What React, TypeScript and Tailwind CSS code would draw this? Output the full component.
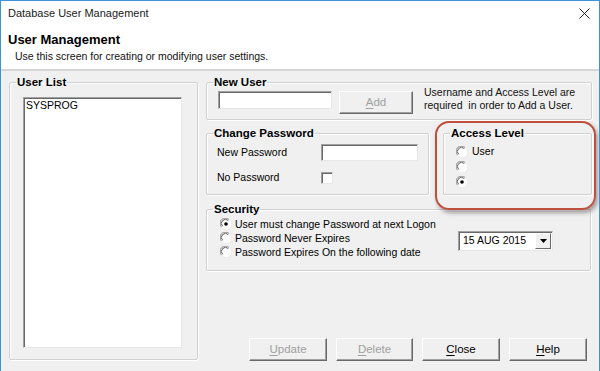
import React from 'react';

const font = "font-['Liberation_Sans',Arial,sans-serif]";

const GroupBox: React.FC<{ title: string; className?: string; children?: React.ReactNode }> = ({ title, className = '', children }) => (
  <fieldset className={`min-w-0 border border-[#d0d0d0] shadow-[1px_1px_0_#fff,inset_1px_1px_0_#fff] rounded-[2px] px-0 ${className}`}>
    <legend className="ml-[6px] px-[1px] text-[11.5px] leading-[13px] font-bold text-black">{title}</legend>
    {children}
  </fieldset>
);

const Sunken: React.FC<{ className?: string; children?: React.ReactNode }> = ({ className = '', children }) => (
  <div className={`bg-white border border-t-[#a0a0a0] border-l-[#a0a0a0] border-r-[#e6e6e6] border-b-[#e6e6e6] shadow-[inset_1px_1px_0_#696969] ${className}`}>
    {children}
  </div>
);

const Radio: React.FC<{ checked?: boolean }> = ({ checked }) => (
  <svg width="12" height="12" viewBox="0 0 12 12" className="shrink-0">
    <circle cx="6" cy="6" r="5.5" fill="#fff" />
    <path d="M1.6 9.2A5 5 0 0 1 9.2 1.6" stroke="#8a8a8a" strokeWidth="1" fill="none" />
    <path d="M2.6 8.3A3.7 3.7 0 0 1 8.3 2.6" stroke="#5a5a5a" strokeWidth="1" fill="none" />
    <path d="M10.4 2.8A5 5 0 0 1 2.8 10.4" stroke="#e8e8e8" strokeWidth="1" fill="none" />
    {checked && <circle cx="6" cy="6" r="1.8" fill="#000" />}
  </svg>
);

const Btn: React.FC<{ label: string; u: string; rest: string; disabled?: boolean; className?: string }> = ({ label, u, rest, disabled, className = '' }) => (
  <div
    className={`h-[23px] flex items-center justify-center bg-[#f0f0f0] border border-t-white border-l-white border-r-[#696969] border-b-[#696969] shadow-[inset_-1px_-1px_0_#a0a0a0] text-[11.5px] ${disabled ? 'text-[#a0a0a0]' : 'text-black'} ${className}`}
    aria-label={label}
  >
    <span className="underline underline-offset-[2px]">{u}</span>
    {rest}
  </div>
);

export default function App() {
  return (
    <div className={`${font} relative w-[600px] h-[371px] overflow-hidden bg-[#f0f0f0] border-t border-l border-r border-[#3d94dc] text-black`}>
      {/* title bar */}
      <div className="h-[25px] bg-white flex items-center justify-between pl-[7px] pr-[9px]">
        <span className="text-[11px] text-[#1a1a1a]">Database User Management</span>
        <svg width="11" height="11" viewBox="0 0 11 11">
          <path d="M0.5 0.5L10.5 10.5M10.5 0.5L0.5 10.5" stroke="#222" strokeWidth="1" />
        </svg>
      </div>

      {/* header */}
      <div className="h-[45px] bg-white border-b-2 border-[#d6d6d6] pl-[7px] pt-[6px]">
        <div className="text-[13px] leading-[15px] font-bold">User Management</div>
        <div className="text-[10.5px] leading-[13px] mt-[3px] ml-[7px] text-[#111]">Use this screen for creating or modifying user settings.</div>
      </div>

      {/* body */}
      <div className="flex pl-[8px] pt-[5px]">
        <GroupBox title="User List" className="w-[189px] h-[284px] shrink-0">
          <Sunken className="ml-[13px] mt-[8px] w-[159px] h-[251px] px-[2px] pt-[1px]">
            <div className="text-[10.5px] leading-[13px]">SYSPROG</div>
          </Sunken>
        </GroupBox>

        <div className="ml-[8px] w-[386px] flex flex-col">
          <GroupBox title="New User" className="h-[44px]">
            <div className="flex items-start mt-[2px]">
              <Sunken className="ml-[11px] w-[114px] h-[18px]" />
              <Btn label="Add" u="A" rest="dd" disabled className="ml-[7px] w-[74px] h-[19px]" />
              <div className="ml-[11px] text-[10.5px] leading-[13px] -mt-[5px] text-[#111]">
                Username and Access Level are
                <br />
                required&nbsp; in order to Add a User.
              </div>
            </div>
          </GroupBox>

          <div className="flex mt-[7px]">
            <GroupBox title="Change Password" className="w-[223px] h-[68px] shrink-0">
              <div className="flex items-center mt-[4px] text-[10.5px]">
                <span className="ml-[10px] w-[104px]">New Password</span>
                <Sunken className="w-[97px] h-[17px]" />
              </div>
              <div className="flex items-center mt-[9px] text-[10.5px]">
                <span className="ml-[10px] w-[104px]">No Password</span>
                <Sunken className="w-[12px] h-[12px]" />
              </div>
            </GroupBox>

            <GroupBox title="Access Level" className="ml-[14px] w-[149px] h-[68px] shrink-0">
              <div className="ml-[12px] mt-[5px] flex flex-col gap-[2px] text-[10.5px] leading-[13px]">
                <div className="flex items-center gap-[4px]"><Radio /><span>User</span></div>
                <div className="flex items-center gap-[4px] h-[13px]"><Radio /></div>
                <div className="flex items-center gap-[4px] h-[13px]"><Radio checked /></div>
              </div>
            </GroupBox>
          </div>

          <GroupBox title="Security" className="mt-[8px] w-[385px] h-[68px]">
            <div className="flex">
              <div className="ml-[13px] mt-[2px] flex flex-col gap-[2px] text-[10.5px] leading-[12px]">
                <div className="flex items-center gap-[3px]"><Radio checked /><span>User must change Password at next Logon</span></div>
                <div className="flex items-center gap-[3px]"><Radio /><span>Password Never Expires</span></div>
                <div className="flex items-center gap-[3px]"><Radio /><span>Password Expires On the following date</span></div>
              </div>
              <Sunken className="ml-auto mr-[37px] mt-[15px] w-[95px] h-[20px] flex items-center justify-between pl-[4px] pr-[1px]">
                <span className="text-[10.5px]">15 AUG 2015</span>
                <div className="w-[16px] h-[16px] flex items-center justify-center bg-[#f0f0f0] border border-t-white border-l-white border-r-[#696969] border-b-[#696969]">
                  <svg width="7" height="4" viewBox="0 0 7 4"><path d="M0 0H7L3.5 4Z" fill="#000" /></svg>
                </div>
              </Sunken>
            </div>
          </GroupBox>

          <div className="flex justify-end gap-[9px] mt-[67px] pr-[5px]">
            <Btn label="Update" u="U" rest="pdate" disabled className="w-[78px]" />
            <Btn label="Delete" u="D" rest="elete" disabled className="w-[77px]" />
            <Btn label="Close" u="C" rest="lose" className="w-[78px]" />
            <Btn label="Help" u="H" rest="elp" className="w-[78px]" />
          </div>
        </div>
      </div>

      {/* highlight annotation */}
      <div className="absolute left-[434px] top-[120px] w-[161px] h-[89px] rounded-[14px] border-2 border-[#c0503e] shadow-[2px_3px_4px_rgba(0,0,0,0.35)] pointer-events-none" />
    </div>
  );
}
